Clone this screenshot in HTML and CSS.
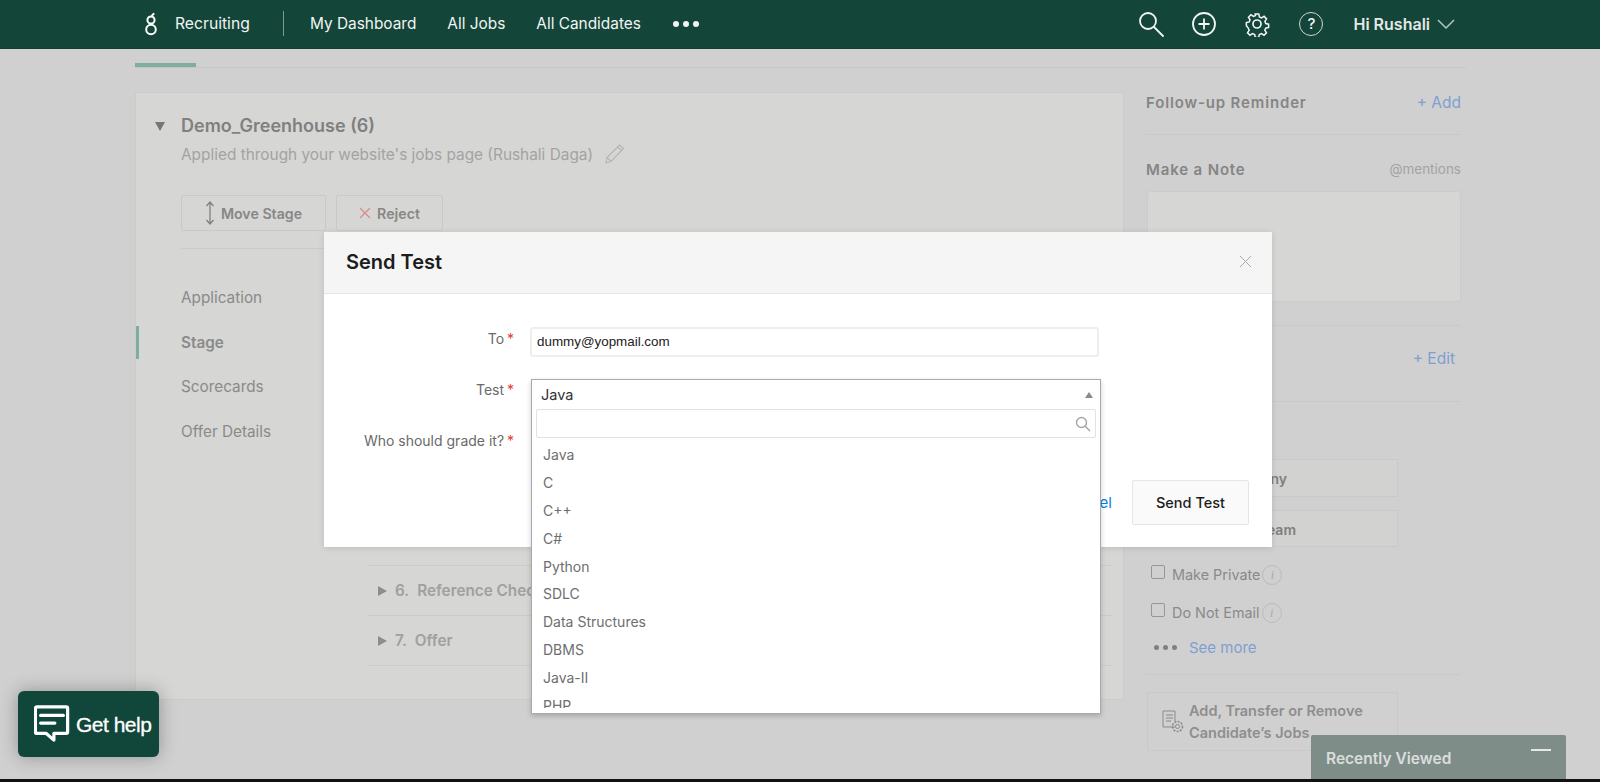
FILE: index.html
```html
<!DOCTYPE html>
<html lang="en">
<head>
<meta charset="utf-8">
<title>Send Test</title>
<link rel="stylesheet" href="styles.css">
</head>
<body>
<header class="nav">
  <svg class="logo" width="14" height="24" viewBox="0 0 14 24"><g fill="none" stroke="#fff" stroke-width="2"><circle cx="7" cy="17.5" r="4.8"/><circle cx="7" cy="8" r="3.6"/><path d="M8 4.6c0-1.6 1-2.6 2.4-3"/></g></svg>
  <span class="nav-product">Recruiting</span>
  <span class="nav-sep"></span>
  <a class="nav-link nav-first">My Dashboard</a>
  <a class="nav-link">All Jobs</a>
  <a class="nav-link">All Candidates</a>
  <span class="nav-dots"><i></i><i></i><i></i></span>
  <div class="nav-right">
    <svg class="nav-ico" width="26" height="26" viewBox="0 0 26 26"><g fill="none" stroke="#f2f5f4" stroke-width="1.8"><circle cx="10" cy="10" r="8"/><path d="M16 16l9 9" stroke-linecap="round"/></g></svg>
    <svg class="nav-ico" width="26" height="26" viewBox="0 0 26 26"><g fill="none" stroke="#f2f5f4" stroke-width="1.8"><circle cx="13" cy="13" r="11"/><path d="M13 7.5v11M7.5 13h11"/></g></svg>
    <svg class="nav-ico nav-gear" width="26" height="26" viewBox="0 0 26 26"><g fill="none" stroke="#f2f5f4" stroke-width="1.7"><circle cx="13" cy="13" r="4"/><path d="M11 2h4l.7 3.3 2.3 1 2.9-1.8 2.7 2.8-1.8 2.8 1 2.4 3.1.7v3.6l-3.2.8-1 2.3 1.8 2.9-2.7 2.7-2.9-1.8-2.3 1-.7 3.2h-3.8l-.7-3.2-2.4-1-2.8 1.8-2.7-2.7 1.8-2.9-1-2.3L1.2 15v-3.6l3.1-.7 1-2.4-1.8-2.8 2.7-2.8L9 4.5l2.3-1z" transform="translate(1.3 1.3) scale(.9)"/></g></svg>
    <span class="nav-help">?</span>
    <span class="nav-user">Hi Rushali</span>
    <svg width="18" height="10" viewBox="0 0 18 10"><path d="M1 1l8 8 8-8" fill="none" stroke="#b5c2be" stroke-width="1.5"/></svg>
  </div>
</header>

<div class="page">
  <div class="tabs"><span class="tab-active"></span></div>
  <div class="main">
    <section class="card">
      <div class="app-title"><span class="tri-down"></span><h2>Demo_Greenhouse (6)</h2></div>
      <div class="app-sub">
        <span>Applied through your website's jobs page (Rushali Daga)</span>
        <svg width="20" height="20" viewBox="0 0 20 20"><path d="M1 19l1-5.5L14.5 1l4 3.5L6 17.5z M12.5 3l4 3.5 M2 13.5l4 4" fill="none" stroke="#b5b5b3" stroke-width="1.1"/></svg>
      </div>
      <div class="app-actions">
        <button class="btn-ghost btn-move"><svg width="10" height="24" viewBox="0 0 10 24"><path d="M5 1v22M1.5 5L5 1l3.5 4M1.5 19L5 23l3.5-4" fill="none" stroke="#808080" stroke-width="1.3"/></svg>Move Stage</button>
        <button class="btn-ghost btn-reject"><svg width="12" height="12" viewBox="0 0 12 12"><path d="M1 1l10 10M11 1L1 11" stroke="#d98a8a" stroke-width="1.2"/></svg>Reject</button>
      </div>
      <div class="app-body">
        <nav class="side">
          <a class="side-item">Application</a>
          <a class="side-item side-active">Stage</a>
          <a class="side-item">Scorecards</a>
          <a class="side-item">Offer Details</a>
        </nav>
        <div class="stages">
          <div class="stage"><span class="tri-right"></span><span class="stage-num">6.</span><span>Reference Check</span></div>
          <div class="stage"><span class="tri-right"></span><span class="stage-num">7.</span><span>Offer</span></div>
        </div>
      </div>
    </section>

    <aside class="rail">
      <div class="rail-row rail-follow"><b>Follow-up Reminder</b><a class="link">+ Add</a></div>
      <div class="rail-note">
        <div class="rail-row"><b>Make a Note</b><span class="muted">@mentions</span></div>
        <div class="note-box"></div>
      </div>
      <div class="rail-edit"><a class="link">+ Edit</a></div>
      <div class="rail-people">
        <div class="ghost-field">Company</div>
        <div class="ghost-field ghost-team">Team</div>
        <label class="check"><span class="box"></span>Make Private<span class="info">i</span></label>
        <label class="check check-2"><span class="box"></span>Do Not Email<span class="info">i</span></label>
        <div class="see-more"><span class="dots-sm"><i></i><i></i><i></i></span><a class="link">See more</a></div>
      </div>
      <div class="jobs-box">
        <svg width="22" height="24" viewBox="0 0 22 24"><g fill="none" stroke="#8a8a8a" stroke-width="1"><path d="M13 17H1V1h12v10M4 5h7M4 8h7M4 11h5"/><circle cx="15.5" cy="16.5" r="2"/><circle cx="15.5" cy="16.5" r="5" stroke-dasharray="2 1.3" stroke-width="1.6"/></g></svg>
        <span>Add, Transfer or Remove Candidate’s Jobs</span>
      </div>
    </aside>
  </div>
</div>

<div class="modal">
  <div class="modal-head">
    <h1>Send Test</h1>
    <svg width="13" height="13" viewBox="0 0 13 13"><path d="M1 1l11 11M12 1L1 12" stroke="#a8a8a8" stroke-width="1"/></svg>
  </div>
  <div class="modal-body">
    <div class="field field-to">
      <label>To <em>*</em></label>
      <div class="input">dummy@yopmail.com</div>
    </div>
    <div class="field field-test"><label>Test <em>*</em></label></div>
    <div class="field field-who"><label>Who should grade it? <em>*</em></label></div>
    <div class="modal-foot">
      <a class="cancel">Cancel</a>
      <button class="send">Send Test</button>
    </div>
  </div>
</div>

<div class="dropdown">
  <div class="dd-value"><span>Java</span><span class="caret-up"></span></div>
  <div class="dd-search">
    <svg width="16" height="16" viewBox="0 0 16 16"><g fill="none" stroke="#a5a5a5" stroke-width="1.4"><circle cx="6.5" cy="6.5" r="5"/><path d="M10 10l5 5"/></g></svg>
  </div>
  <ul class="dd-list">
    <li>Java</li><li>C</li><li>C++</li><li>C#</li><li>Python</li><li>SDLC</li><li>Data Structures</li><li>DBMS</li><li>Java-II</li><li>PHP</li>
  </ul>
</div>

<div class="help">
  <svg width="36" height="40" viewBox="0 0 38 40"><g fill="none" stroke="#fff" stroke-width="3.4" stroke-linejoin="round"><path d="M3 2h31a1.5 1.5 0 0 1 1.5 1.5v25a1.5 1.5 0 0 1-1.5 1.5H21v7l-8-7H3a1.5 1.5 0 0 1-1.5-1.5v-25A1.5 1.5 0 0 1 3 2z"/><path d="M7 11h24M7 19h15" stroke-linecap="round"/></g></svg>
  <span>Get help</span>
</div>

<div class="recent"><span>Recently Viewed</span><i></i></div>
<div class="screen-edge"></div>
</body>
</html>
```

FILE: styles.css
```css
* { box-sizing: border-box; }
html, body { margin: 0; height: 782px; overflow: hidden; }
body {
  background: #d0d0d0;
  font-family: Inter, "Liberation Sans", sans-serif;
  color: #808080;
  position: relative;
}
i, em { font-style: normal; }
h1, h2 { margin: 0; font: inherit; }
a { display: inline-block; }

/* top bar */
.nav {
  height: 49px;
  background: #134539;
  display: flex;
  align-items: center;
  padding: 0 145px 1px 144px;
  color: #f1f4f3;
  font-size: 15.4px;
  border-bottom: 1px solid #0f3d32;
}
.logo { margin-right: 17px; }
.nav-product { width: 108px; font-size: 15.7px; }
.nav-sep { width: 1px; height: 25px; background: #7c9a92; }
.nav-link { margin-left: 31px; white-space: nowrap; }
.nav-first { margin-left: 26px; }
.nav-dots { display: flex; gap: 4px; margin-left: 32px; }
.nav-dots i { width: 6px; height: 6px; border-radius: 50%; background: #f1f4f3; }
.nav-right { margin-left: auto; display: flex; align-items: center; }
.nav-ico { margin-right: 27px; }
.nav-gear { margin-right: 29px; }
.nav-help {
  width: 24px; height: 24px;
  border: 1.5px solid #cfd6d3;
  border-radius: 50%;
  text-align: center;
  font-size: 15px;
  font-weight: 500;
  line-height: 21px;
  margin-right: 30px;
}
.nav-user { font-weight: 600; font-size: 16px; margin-right: 7px; color: #e4e8e6; }

/* page */
.page { margin-left: 135px; width: 1331px; }
.tabs { height: 19px; padding-top: 14px; border-bottom: 1px solid #c6c6c6; }
.tab-active { display: block; width: 61px; height: 4px; background: #7fae9f; }
.main { display: flex; padding-top: 24px; }

.card {
  width: 989px;
  height: 608px;
  background: #d6d6d4;
  border: 1px solid #cbcbcb;
  padding: 20px 0 0 45px;
  flex: none;
}
.app-title { display: flex; align-items: center; height: 24px; margin-left: -27px; font-size: 18px; font-weight: 600; color: #808080; }
.tri-down { width: 0; height: 0; border: 5.5px solid transparent; border-top: 9px solid #777; border-bottom: 0; margin: 3px 16px 0 1px; }
.app-sub { display: flex; align-items: center; gap: 12px; margin-top: 6px; height: 22px; font-size: 15.4px; color: #a3a3a3; }
.app-actions { display: flex; gap: 10px; margin-top: 30px; margin-right: 45px; padding-bottom: 17px; border-bottom: 1px solid #cbcbc9; }
.btn-ghost {
  display: flex; align-items: center; justify-content: center; gap: 6px;
  height: 36px;
  background: transparent;
  border: 1px solid #c9c9c7;
  border-radius: 2px;
  font: 600 14.2px Inter, "Liberation Sans", sans-serif;
  color: #878787;
}
.btn-move { width: 145px; }
.btn-reject { width: 107px; }
.app-body { display: flex; }
.side { width: 186px; flex: none; padding-top: 27px; }
.side-item { display: block; height: 44.7px; line-height: 44px; font-size: 15.3px; color: #8a8a8a; position: relative; }
.side-active { font-weight: 600; }
.side-active::before { content: ""; position: absolute; left: -45px; top: 5px; width: 3px; height: 33px; background: #7fae9f; }
.stages { width: 745px; padding-top: 316px; }
.stage {
  display: flex; align-items: center;
  height: 50px;
  padding-left: 11px;
  border-top: 1px solid #cbcbc9;
  font-size: 15.3px;
  font-weight: 600;
  color: #a0a09f;
}
.stage:last-child { border-bottom: 1px solid #cbcbc9; height: 51px; }
.tri-right { width: 0; height: 0; border: 5px solid transparent; border-left: 9px solid #8e8e8e; border-right: 0; margin-right: 8px; }
.stage-num { margin-right: 8px; }

/* right rail */
.rail { width: 315px; margin-left: 22px; flex: none; font-size: 15.5px; }
.rail-row { display: flex; justify-content: space-between; align-items: center; }
.rail-row b { font-weight: 600; font-size: 15px; letter-spacing: .85px; color: #858585; }
.rail-follow { height: 43px; padding-bottom: 21px; border-bottom: 1px solid #c9c9c9; }
.link { color: #7e9fd0; }
.muted { font-size: 13.5px; color: #a3a3a3; }
.rail-note { padding: 24px 0 23px; border-bottom: 1px solid #c9c9c9; }
.rail-note .rail-row { height: 20px; }
.note-box { margin: 12px 0 0 1px; height: 111px; background: #d6d6d4; border: 1px solid #cbcbcb; border-radius: 3px; }
.rail-edit { height: 76px; padding: 23px 6px 0 0; text-align: right; border-bottom: 1px solid #c9c9c9; }
.rail-people { padding-top: 57px; height: 273px; border-bottom: 1px solid #c9c9c9; font-size: 14.4px; }
.ghost-field { margin-left: 1px; width: 251px; height: 38px; margin-bottom: 13px; border: 1px solid #c9c9c9; background: #d2d2d0; line-height: 38px; padding-right: 110px; text-align: right; font-weight: 600; font-size: 14px; }
.ghost-team { height: 37px; margin-bottom: 17px; padding-right: 101px; }
.check { display: flex; align-items: center; height: 20px; color: #8a8a8a; position: relative; }
.check-2 { margin-top: 18px; }
.box { width: 14px; height: 14px; border: 1px solid #969696; border-radius: 2px; margin: -5px 7px 0 5px; }
.info { width: 20px; height: 20px; border: 1px solid #bcbcbc; border-radius: 50%; margin: 2px 0 0 2px; text-align: center; font: italic 12px/18px "Liberation Serif", serif; color: #a8a8a8; }
.see-more { display: flex; align-items: center; margin-top: 15px; height: 20px; font-size: 15px; }
.dots-sm { display: flex; gap: 4px; margin: 0 12px 0 8px; }
.dots-sm i { width: 5px; height: 5px; border-radius: 50%; background: #808080; }
.jobs-box {
  display: flex; align-items: center; gap: 5px;
  margin: 17px 0 0 1px;
  width: 251px; height: 59px;
  padding-left: 14px;
  border: 1px solid #c9c9c9;
  font-weight: 600; font-size: 14.5px; line-height: 22px; color: #8e8e8e;
}
.jobs-box svg { flex: none; }

/* modal */
.modal {
  position: absolute;
  left: 324px; top: 232px;
  width: 948px; height: 315px;
  background: #fff;
  box-shadow: 0 1px 6px rgba(0,0,0,.12);
}
.modal-head {
  display: flex; align-items: center; justify-content: space-between;
  height: 62px;
  padding: 0 20px 2px 22px;
  background: #f5f5f5;
  border-bottom: 1px solid #e6e6e6;
}
.modal-head h1 { font-size: 20px; font-weight: 600; color: #1c1c1c; }
.modal-body { padding-top: 33px; }
.field { display: flex; align-items: center; }
.field label { width: 190px; text-align: right; font-size: 14px; color: #6a6a6a; white-space: nowrap; }
.field label em { color: #e53935; margin-left: -1px; }
.field-to { height: 30px; }
.field-to label { padding-bottom: 7px; }
.field-test { margin-top: 19px; height: 30px; }
.field-test label { padding-bottom: 4px; }
.field-who { margin-top: 24px; height: 20px; }
.input {
  width: 569px; height: 30px;
  margin-left: 16px;
  border: 2px solid #eee;
  border-radius: 3px;
  padding-left: 5px;
  font: 13.4px/26px "Liberation Sans", sans-serif;
  color: #222;
}
.modal-foot { display: flex; justify-content: flex-end; align-items: center; gap: 20px; margin-top: 30px; padding-right: 23px; }
.cancel { color: #0a7fe0; font-size: 15px; }
.send {
  width: 117px; height: 45px;
  background: #fafafa;
  border: 1px solid #e6e6e6;
  border-radius: 2px;
  font: 500 14.5px Inter, "Liberation Sans", sans-serif;
  color: #1c1c1c;
}

/* dropdown */
.dropdown {
  position: absolute;
  left: 531px; top: 379px;
  width: 570px; height: 335px;
  background: #fff;
  border: 1px solid #a9a9a9;
  box-shadow: 0 2px 5px rgba(0,0,0,.2);
  overflow: hidden;
}
.dd-value { display: flex; justify-content: space-between; align-items: center; height: 29px; padding: 0 7px 0 9px; font-size: 14.5px; color: #333; }
.caret-up { width: 0; height: 0; border: 4.5px solid transparent; border-bottom: 6px solid #8a8a8a; border-top: 0; }
.dd-search { display: flex; align-items: center; justify-content: flex-end; height: 29px; margin: 0 4px 0 4px; padding-right: 4px; border: 1px solid #e2e2e2; border-radius: 2px; }
.dd-list { list-style: none; margin: 3px 0 0; padding: 0 0 0 11px; height: 267px; overflow: hidden; font-size: 14px; color: #6e6e6e; }
.dd-list li { height: 27.9px; line-height: 27.9px; }

/* floating */
.help {
  position: absolute;
  left: 18px; top: 691px;
  width: 141px; height: 66px;
  display: flex; align-items: center; gap: 6px;
  padding-left: 16px;
  background: #11463a;
  border-radius: 6px;
  box-shadow: 0 0 18px rgba(0,0,0,.3);
  font: 21px "Liberation Sans", sans-serif;
  letter-spacing: -.5px;
  -webkit-text-stroke: .3px #fff;
  color: #fff;
}
.help span { margin-top: 2px; }
.recent {
  position: absolute;
  left: 1311px; top: 735px;
  width: 255px; height: 44px;
  padding: 14px 15px;
  display: flex; justify-content: space-between;
  background: #7f8d89;
  border-radius: 2px 2px 0 0;
  font-weight: 600; font-size: 15.5px;
  color: #d9dedc;
}
.recent i { width: 20px; height: 2px; background: #e4e8e6; }
.screen-edge { position: absolute; left: 0; right: 0; top: 779px; height: 3px; background: #111; }
```
